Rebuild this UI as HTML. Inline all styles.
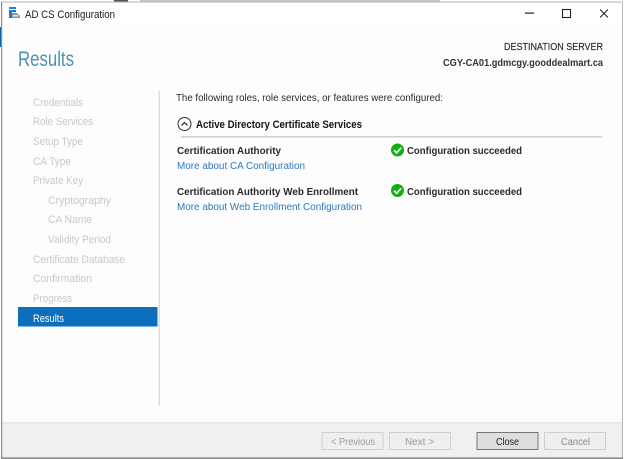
<!DOCTYPE html>
<html><head><meta charset="utf-8"><style>
html,body{margin:0;padding:0;background:#fff;width:624px;height:459px;overflow:hidden}
svg{display:block;font-family:"Liberation Sans",sans-serif}
</style></head><body>
<svg width="624" height="459" viewBox="0 0 624 459" xmlns="http://www.w3.org/2000/svg">
<rect width="624" height="459" fill="#fff"/>
<rect x="140" y="0" width="300" height="2" fill="#c8c8c8"/>
<rect x="114" y="0" width="14" height="2" fill="#555"/>
<!-- window frame -->
<rect x="1" y="2" width="622" height="456" fill="#fdfdfd"/>
<rect x="2" y="3" width="620" height="23" fill="#fff"/>
<rect x="2" y="423" width="620" height="34" fill="#f0f0f0"/>
<rect x="2" y="422" width="620" height="1.5" fill="#e6e6e6"/>
<rect x="1" y="1.5" width="622" height="1" fill="#b4b4b4"/>
<rect x="1" y="2" width="1.2" height="456" fill="#8e8e8e"/>
<rect x="622" y="2" width="1" height="456" fill="#b8b8b8"/>
<rect x="1" y="457.5" width="622" height="1.3" fill="#707070"/>
<rect x="0" y="27" width="1" height="20" fill="#0a64b0"/>
<!-- app icon -->
<rect x="9" y="7" width="7" height="2" fill="#1f7fc8"/>
<rect x="9" y="10" width="7" height="2" fill="#1f7fc8"/>
<rect x="9" y="12" width="3" height="6" fill="#1f7fc8"/>
<path d="M12 13h5l3 3v2H12z" fill="#7d9db5"/>
<rect x="13" y="15" width="5" height="1.5" fill="#dfe8ef"/>
<text x="25" y="18" font-size="11" fill="#1a1a1a" textLength="90" lengthAdjust="spacingAndGlyphs">AD CS Configuration</text>
<!-- window buttons -->
<rect x="525" y="12.5" width="9" height="1.2" fill="#222"/>
<rect x="562.5" y="9.5" width="8" height="8" fill="none" stroke="#222" stroke-width="1.1"/>
<path d="M600 9.5l8 8M608 9.5l-8 8" stroke="#222" stroke-width="1" fill="none"/>
<text x="18" y="66" font-size="21" fill="#4a93b0" textLength="56" lengthAdjust="spacingAndGlyphs">Results</text>
<text x="504" y="50" font-size="10" fill="#2a2a2a" stroke="#2a2a2a" stroke-width="0.15" textLength="99" lengthAdjust="spacingAndGlyphs">DESTINATION SERVER</text>
<text x="443" y="66" font-size="10.5" font-weight="bold" fill="#333" textLength="160" lengthAdjust="spacingAndGlyphs">CGY-CA01.gdmcgy.gooddealmart.ca</text>
<!-- sidebar -->
<g font-size="11" fill="#c8c8c8">
<text x="33" y="106" textLength="50" lengthAdjust="spacingAndGlyphs">Credentials</text>
<text x="33" y="125" textLength="60" lengthAdjust="spacingAndGlyphs">Role Services</text>
<text x="33" y="145" textLength="50" lengthAdjust="spacingAndGlyphs">Setup Type</text>
<text x="33" y="165" textLength="38" lengthAdjust="spacingAndGlyphs">CA Type</text>
<text x="33" y="184" textLength="50" lengthAdjust="spacingAndGlyphs">Private Key</text>
<text x="48" y="204" textLength="63" lengthAdjust="spacingAndGlyphs">Cryptography</text>
<text x="48" y="223" textLength="44" lengthAdjust="spacingAndGlyphs">CA Name</text>
<text x="48" y="243" textLength="63" lengthAdjust="spacingAndGlyphs">Validity Period</text>
<text x="33" y="263" textLength="92" lengthAdjust="spacingAndGlyphs">Certificate Database</text>
<text x="33" y="282" textLength="59" lengthAdjust="spacingAndGlyphs">Confirmation</text>
<text x="33" y="302" textLength="39" lengthAdjust="spacingAndGlyphs">Progress</text>
</g>
<rect x="18" y="307" width="139.5" height="19.5" fill="#0b6fbd"/>
<text x="33" y="322" font-size="11" fill="#fff" textLength="31" lengthAdjust="spacingAndGlyphs">Results</text>
<rect x="158.5" y="91" width="1.5" height="315" fill="#dcdcdc"/>
<!-- content -->
<text x="176" y="101" font-size="10.5" fill="#2a2a2a" textLength="267" lengthAdjust="spacingAndGlyphs">The following roles, role services, or features were configured:</text>
<circle cx="184.5" cy="124" r="6.5" fill="#fff" stroke="#333" stroke-width="1"/>
<path d="M181.5 125.5l3-3 3 3" fill="none" stroke="#222" stroke-width="1.2"/>
<text x="196" y="128" font-size="10.7" font-weight="bold" fill="#151515" textLength="166" lengthAdjust="spacingAndGlyphs">Active Directory Certificate Services</text>
<rect x="181" y="136" width="421" height="1.5" fill="#cfcfcf"/>
<text x="177" y="154" font-size="10.5" font-weight="bold" fill="#2a2a2a" textLength="104" lengthAdjust="spacingAndGlyphs">Certification Authority</text>
<text x="177" y="169" font-size="10.5" fill="#2b78c4" textLength="128" lengthAdjust="spacingAndGlyphs">More about CA Configuration</text>
<text x="177" y="195" font-size="10.5" font-weight="bold" fill="#2a2a2a" textLength="181" lengthAdjust="spacingAndGlyphs">Certification Authority Web Enrollment</text>
<text x="177" y="210" font-size="10.5" fill="#2b78c4" textLength="185" lengthAdjust="spacingAndGlyphs">More about Web Enrollment Configuration</text>
<g>
<circle cx="397.5" cy="150" r="6.5" fill="#10b010"/>
<path d="M394 150.2l2.6 2.6 4.6-5" fill="none" stroke="#fff" stroke-width="1.7"/>
<circle cx="397.5" cy="190.5" r="6.5" fill="#10b010"/>
<path d="M394 190.7l2.6 2.6 4.6-5" fill="none" stroke="#fff" stroke-width="1.7"/>
</g>
<text x="407" y="154" font-size="10.5" font-weight="bold" fill="#2a2a2a" textLength="115" lengthAdjust="spacingAndGlyphs">Configuration succeeded</text>
<text x="407" y="195" font-size="10.5" font-weight="bold" fill="#2a2a2a" textLength="115" lengthAdjust="spacingAndGlyphs">Configuration succeeded</text>
<!-- buttons -->
<rect x="322" y="432.5" width="61" height="17" fill="#efefef" stroke="#cfcfcf" stroke-width="1"/>
<rect x="389.5" y="432.5" width="61" height="17" fill="#efefef" stroke="#cfcfcf" stroke-width="1"/>
<rect x="477" y="432.5" width="61" height="17" fill="#dedede" stroke="#777" stroke-width="1"/>
<rect x="544.5" y="432.5" width="61" height="17" fill="#efefef" stroke="#cfcfcf" stroke-width="1"/>
<text x="331" y="445" font-size="10.5" fill="#9a9a9a" textLength="44" lengthAdjust="spacingAndGlyphs">&lt; Previous</text>
<text x="405" y="445" font-size="10.5" fill="#9a9a9a" textLength="29" lengthAdjust="spacingAndGlyphs">Next &gt;</text>
<text x="496" y="445" font-size="10.5" fill="#1a1a1a" textLength="23" lengthAdjust="spacingAndGlyphs">Close</text>
<text x="561" y="445" font-size="10.5" fill="#8a8a8a" textLength="29" lengthAdjust="spacingAndGlyphs">Cancel</text>
</svg>
</body></html>
